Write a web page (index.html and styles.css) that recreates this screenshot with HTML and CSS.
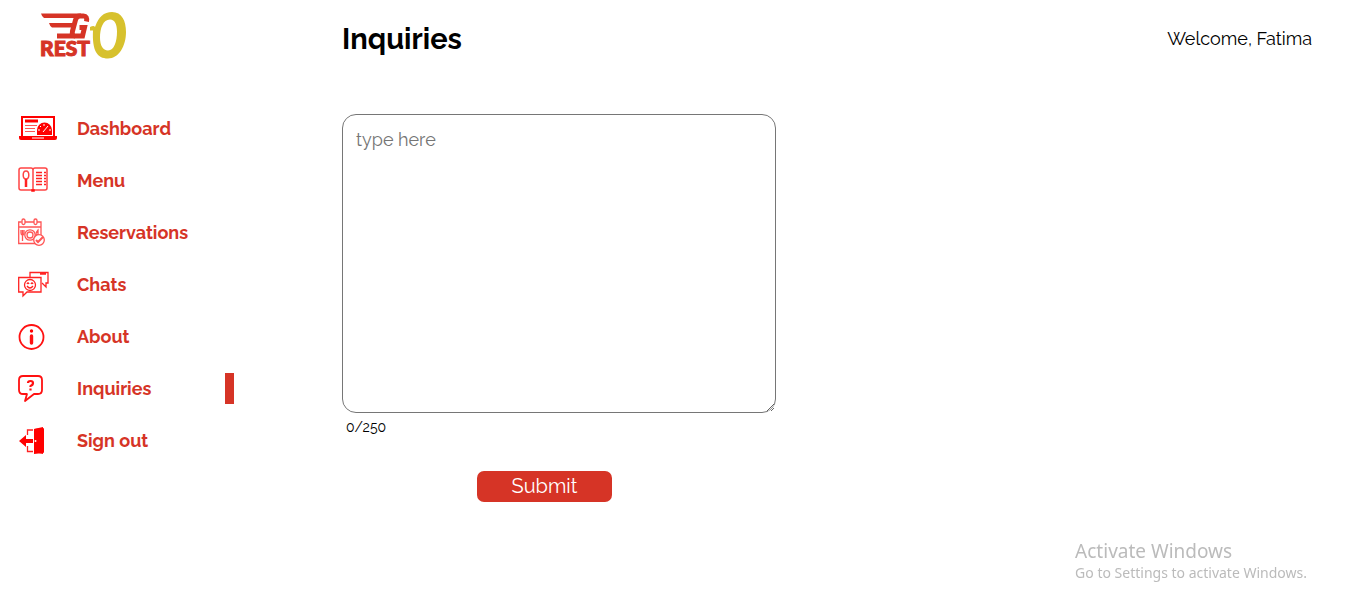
FILE: index.html
```html
<!DOCTYPE html>
<html lang="en">
<head>
<meta charset="utf-8">
<meta name="viewport" content="width=device-width, initial-scale=1">
<title>Inquiries</title>
<link rel="stylesheet" href="styles.css">
</head>
<body>
<div class="layout">
  <aside class="sidebar">
    <a class="logo" href="#" aria-label="Rest GO">
      <svg width="88" height="48" viewBox="0 0 88 48">
        <g fill="#d63426">
          <path d="M1 2.500h40v4.500H4q-2-1-3-4.500zM9 12h25v4.500H12q-2-1-3-4.500zM17 27.500v-5h18v5z"/>
          <path d="M46.500 10.500q1-5.500-3-5.500H40q-3.500 0-4.500 4l-3 11q-1 5 2.500 5h7.500l2-8.500h-5" fill="none" stroke="#d63426" stroke-width="5"/>
          <text class="logo-text" x="0" y="45">REST</text>
        </g>
        <path fill="#d7c12d" fill-rule="evenodd" d="M50 16q4-2 5 0Q60 1 72 1c10 0 14 9 14 20 0 14-7 26.500-18 26.500-11 0-16-8-15-28h-3zM70 8.500c-7 0-10 9-10 18 0 8 3 13 8 13 6 0 9-9 9-19 0-7-2-12-7-12z"/>
      </svg>
    </a>
    <nav class="nav" aria-label="Main">
      <a class="nav-link" href="#">
        <svg class="icon" viewBox="0 0 40 32" fill="none" stroke="#f00" stroke-width="2">
          <path d="M4 23V4h32v19"/>
          <path d="M1 23h38v2q0 2-2 2H3q-2 0-2-2z" fill="#f00" stroke="none"/>
          <path d="M14 25h12" stroke="#fff" stroke-width="1"/>
          <path d="M7 8h13" stroke-width="3"/>
          <path d="M7 12.500h12M7 15.500h10M7 18.500h10" stroke="#f55" stroke-width="1"/>
          <path d="M19 22v-5a7.500 7.500 0 0 1 15 0v5z" fill="#f00" stroke="none"/>
          <path d="M25 19l5-6M20 17h2M31 17h2M22 13l1 1M26 11v2" stroke="#fff" stroke-width="1"/>
        </svg>
        <span>Dashboard</span>
      </a>
      <a class="nav-link" href="#">
        <svg class="icon" viewBox="0 0 40 32" fill="none" stroke="#f44" stroke-width="1.500">
          <path d="M15 25H3q-2 0-2-2V5q0-2 2-2h10q2 0 2 2 0-2 2-2h10q2 0 2 2v18q0 2-2 2H15zM15 4v22"/>
          <path d="M14 25h2v1h-2z" fill="#f00" stroke="#f11"/>
          <ellipse cx="8" cy="10" rx="2.800" ry="4"/>
          <path d="M8 14v8" stroke="#f22" stroke-width="2.500"/>
          <path d="M18 7.500h6M26 7.500h2M18 10.500h6M26 10.500h2M18 13.500h6M26 13.500h2M18 16.500h6M26 16.500h2M18 19.500h6M26 19.500h2" stroke="#f22"/>
        </svg>
        <span>Menu</span>
      </a>
      <a class="nav-link" href="#">
        <svg class="icon" viewBox="0 0 40 32" fill="none" stroke="#f55" stroke-width="1.300">
          <path d="M18 26.500H.7V5h3M7 5h9M19 5h4v14M1 10h22"/>
          <rect x="4" y="2" width="3" height="5.500" rx="1.500"/><rect x="16" y="2" width="3" height="5.500" rx="1.500"/>
          <circle cx="12" cy="18" r="5.200"/><circle cx="12" cy="18" r="3"/>
          <path d="M3 13v3q0 2 1.500 2T6 16v-3M4.500 13v11M20 19v-6q-2 2-2 5h2"/>
          <circle cx="21" cy="23" r="5.300" fill="#fff"/>
          <path d="M18 23l2 2 5-5" stroke-width="2"/>
        </svg>
        <span>Reservations</span>
      </a>
      <a class="nav-link" href="#">
        <svg class="icon" viewBox="0 0 40 32" fill="none" stroke="#f22" stroke-width="1.300">
          <path d="M12 8V3.500h18V14h-2v4l-4-4M22 5h6"/>
          <path d="M.7 8.500H23V23H9l-4 4v-4H.7z"/>
          <circle cx="12" cy="16" r="5.500"/>
          <path d="M9 15q1-2 2 0M13 15q1-2 2 0M9 17q3 4 6 0"/>
        </svg>
        <span>Chats</span>
      </a>
      <a class="nav-link" href="#">
        <svg class="icon" viewBox="0 0 40 32" fill="none" stroke="#f11">
          <circle cx="13.500" cy="16" r="12" stroke-width="1.800"/>
          <circle cx="13.500" cy="10" r="1.700" fill="#f00" stroke="none"/>
          <path d="M13.500 15v7" stroke-width="3.400" stroke-linecap="round"/>
        </svg>
        <span>About</span>
      </a>
      <a class="nav-link is-active" href="#" aria-current="page">
        <svg class="icon" viewBox="0 0 40 32" fill="none" stroke="#f11" stroke-width="1.800" stroke-linejoin="round">
          <path d="M5 3h15q4 0 4 4v10q0 4-4 4h-4l-9 7 2-7H5q-4 0-4-4V7q0-4 4-4z"/>
          <path d="M10 10q0-2 2.500-2t2.500 2-2.500 3v1M12.500 15.500v2" stroke-width="2.200"/>
        </svg>
        <span>Inquiries</span>
      </a>
      <a class="nav-link" href="#">
        <svg class="icon" viewBox="0 0 40 32" fill="#f00">
          <path d="M16 4l9-1q1 0 1 1v23q0 1-1 1l-9 1z"/>
          <path d="M16 4l9-2v27l-9-2z"/>
          <path d="M1 16l7-6v4h7v4H8v4z"/>
          <path d="M15 5H9.500v5M9.500 21v5.500H15" fill="none" stroke="#f22" stroke-width="1.300"/>
          <circle cx="17.500" cy="16" r="1" fill="#fff"/>
        </svg>
        <span>Sign out</span>
      </a>
    </nav>
  </aside>
  <main class="main">
    <header class="header">
      <h1 class="title">Inquiries</h1>
      <p class="welcome">Welcome, Fatima</p>
    </header>
    <form class="form">
      <textarea class="message" aria-label="Inquiry" placeholder="type here" maxlength="250"></textarea>
      <p class="counter">0/250</p>
      <button class="submit" type="button">Submit</button>
    </form>
  </main>
</div>
<aside class="activation">
  <p class="activation-title">Activate Windows</p>
  <p class="activation-text">Go to Settings to activate Windows.</p>
</aside>
</body>
</html>
```
FILE: styles.css
```css
* {
  box-sizing: border-box;
}

body {
  margin: 0;
  background: #fff;
  color: #000;
  font-family: Raleway, Lato, sans-serif;
  font-size: 18px;
  line-height: 22px;
}

h1,
p {
  margin: 0;
}

.layout {
  display: grid;
  grid-template-columns: 234px minmax(0, 1fr);
}

.sidebar {
  padding-top: 11px;
}

.logo {
  display: block;
  height: 48px;
  margin-left: 40px;
}

.logo-text {
  font-family: Lato, sans-serif;
  font-size: 21px;
  font-weight: 900;
  stroke: #d63426;
  stroke-width: 1px;
}

.nav {
  display: flex;
  flex-direction: column;
  gap: 21px;
  margin-top: 54px;
}

.nav-link {
  display: flex;
  align-items: center;
  gap: 19px;
  height: 31px;
  padding-left: 18px;
  color: #d63426;
  font-weight: 700;
  text-decoration: none;
}

.nav-link.is-active {
  border-right: 9px solid #d63426;
}

.icon {
  width: 40px;
  height: 32px;
  flex: none;
}

.main {
  padding: 21px 54px 0 108px;
}

.header {
  display: flex;
  align-items: center;
  justify-content: space-between;
}

.title {
  font-size: 29px;
  font-weight: 700;
  line-height: 36px;
}

.form {
  max-width: 434px;
  margin-top: 57px;
}

.message {
  display: block;
  width: 100%;
  height: 299px;
  padding: 13px;
  border: 1px solid #767676;
  border-radius: 14px;
  font: inherit;
  line-height: 24px;
}

.message::placeholder {
  color: #757575;
}

.counter {
  padding: 4px;
  font-size: 14px;
  line-height: 20px;
}

.submit {
  display: block;
  width: 135px;
  height: 31px;
  margin: 30px 0 0 135px;
  padding: 0 0 2px;
  border: 0;
  border-radius: 7px;
  background: #d63426;
  color: #fff;
  font: inherit;
  font-size: 20px;
}

.activation {
  position: fixed;
  right: 59px;
  bottom: 21px;
  color: #bbb;
  font-family: "Segoe UI", "Noto Sans", sans-serif;
}

.activation-title {
  font-size: 19px;
  line-height: 22px;
}

.activation-text {
  font-size: 14px;
  line-height: 22px;
}
```
